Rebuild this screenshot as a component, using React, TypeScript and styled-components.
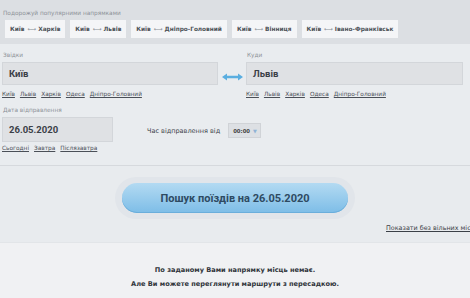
import React from 'react';
import styled, { createGlobalStyle } from 'styled-components';

const GlobalStyle = createGlobalStyle`
  html, body {
    margin: 0;
    padding: 0;
    background: #f0f1f3;
    font-family: "DejaVu Sans", Verdana, sans-serif;
    color: #333;
  }
`;

const Page = styled.div`
  width: 470px;
  overflow: hidden;
`;

const TopBar = styled.div`
  background: #dcdfe3;
  padding: 9px 0 6px 3px;
  height: 29px;
`;

const Hint = styled.div`
  font-size: 5.8px;
  line-height: 8px;
  color: #8d9298;
  margin-bottom: 3px;
`;

const ChipRow = styled.div`
  display: flex;
  gap: 5px;
  padding-left: 2px;
`;

const Chip = styled.a`
  display: flex;
  align-items: center;
  gap: 3px;
  height: 18px;
  padding: 0 5px;
  background: #f4f5f7;
  font-size: 5.8px;
  font-weight: 700;
  color: #4d5258;
  white-space: nowrap;
`;

const Arrow = styled.span`
  color: #8a9097;
  font-weight: 400;
  letter-spacing: -1px;
`;

const Form = styled.div`
  background: #e9ecef;
  padding: 7px 7px 0 2px;
  height: 114px;
  border-bottom: 1px solid #d6d9dd;
`;

const DirRow = styled.div`
  display: grid;
  grid-template-columns: 216px 28px 217px;
  align-items: start;
`;

const Field = styled.div`
  display: flex;
  flex-direction: column;
`;

const Label = styled.div`
  font-size: 5.8px;
  line-height: 8px;
  color: #8d9298;
  padding-left: 1px;
  margin-bottom: 3px;
`;

const Input = styled.div<{ $w?: number; $h?: number }>`
  width: ${({ $w }) => ($w ? `${$w}px` : '100%')};
  height: ${({ $h }) => $h ?? 23}px;
  box-sizing: border-box;
  background: #dfe1e4;
  border: 1px solid #d3d6da;
  display: flex;
  align-items: center;
  padding-left: 6px;
  font-family: Roboto, "Liberation Sans", Arial, sans-serif;
  font-size: 9.5px;
  font-weight: 700;
  color: #3b4047;
`;

const Links = styled.div<{ $top?: number }>`
  display: flex;
  gap: 5px;
  margin-top: ${({ $top }) => $top ?? 5}px;
  font-size: 5.8px;
  line-height: 8px;
`;

const QuickLink = styled.a`
  color: #4a4f57;
  text-decoration: underline;
`;

const Swap = styled.div`
  display: flex;
  justify-content: center;
  padding-top: 22px;
`;

const DateRow = styled.div`
  display: flex;
  align-items: flex-start;
  margin-top: 8px;
`;

const TimeGroup = styled.div`
  display: flex;
  align-items: center;
  gap: 8px;
  margin-left: 34px;
  margin-top: 17px;
  font-size: 6.5px;
  color: #3b4047;
`;

const Select = styled.div`
  display: flex;
  align-items: center;
  gap: 3px;
  height: 13px;
  padding: 0 3px 0 4px;
  background: #dde0e4;
  border: 1px solid #d0d3d7;
  font-size: 5.3px;
  font-weight: 700;
  color: #444;
`;

const Caret = styled.span`
  color: #8fb3d6;
  font-size: 5px;
`;

const SearchBlock = styled.div`
  background: #e8ebee;
  height: 77px;
  box-sizing: border-box;
  padding-top: 11px;
  display: flex;
  flex-direction: column;
  align-items: center;
  border-bottom: 1px solid #e2e5e8;
`;

const Halo = styled.div`
  padding: 6px 7px;
  border-radius: 22px;
  background: #e1e5ea;
`;

const SearchButton = styled.button`
  width: 226px;
  height: 30px;
  border: none;
  border-radius: 16px;
  background: linear-gradient(#b3daf2, #7dbde7);
  box-shadow: inset 0 -1px 0 #6aaedb;
  font-family: Roboto, "Liberation Sans", Arial, sans-serif;
  font-size: 11px;
  font-weight: 700;
  color: #2e4a62;
`;

const NoFree = styled.a`
  align-self: flex-start;
  margin-top: 5px;
  margin-left: 386px;
  font-size: 6.4px;
  color: #3b4047;
  text-decoration: underline;
  white-space: nowrap;
`;

const Notice = styled.div`
  padding-top: 20px;
  text-align: center;
  font-size: 6.6px;
  font-weight: 700;
  color: #2f343a;
  line-height: 14px;
`;

const routes = ['Харків', 'Львів', 'Дніпро-Головний', 'Вінниця', 'Івано-Франківськ'];
const cities = ['Київ', 'Львів', 'Харків', 'Одеса', 'Дніпро-Головний'];

const SwapIcon = () => (
  <svg width="21" height="8" viewBox="0 0 21 8">
    <path d="M0 4 L5 0.5 L5 2.8 L16 2.8 L16 0.5 L21 4 L16 7.5 L16 5.2 L5 5.2 L5 7.5 Z" fill="#5aaee0" />
  </svg>
);

const App: React.FC = () => (
  <Page>
    <GlobalStyle />
    <TopBar>
      <Hint>Подорожуй популярними напрямками</Hint>
      <ChipRow>
        {routes.map(r => (
          <Chip key={r}>
            Київ <Arrow>←→</Arrow> {r}
          </Chip>
        ))}
      </ChipRow>
    </TopBar>
    <Form>
      <DirRow>
        <Field>
          <Label>Звідки</Label>
          <Input>Київ</Input>
          <Links>
            {cities.map(c => <QuickLink key={c}>{c}</QuickLink>)}
          </Links>
        </Field>
        <Swap>
          <SwapIcon />
        </Swap>
        <Field>
          <Label>Куди</Label>
          <Input>Львів</Input>
          <Links>
            {cities.map(c => <QuickLink key={c}>{c}</QuickLink>)}
          </Links>
        </Field>
      </DirRow>
      <DateRow>
        <Field>
          <Label>Дата відправлення</Label>
          <Input $w={111} $h={25}>26.05.2020</Input>
          <Links $top={2}>
            <QuickLink>Сьогодні</QuickLink>
            <QuickLink>Завтра</QuickLink>
            <QuickLink>Післязавтра</QuickLink>
          </Links>
        </Field>
        <TimeGroup>
          Час відправлення від
          <Select>
            00:00 <Caret>▼</Caret>
          </Select>
        </TimeGroup>
      </DateRow>
    </Form>
    <SearchBlock>
      <Halo>
        <SearchButton>Пошук поїздів на 26.05.2020</SearchButton>
      </Halo>
      <NoFree>Показати без вільних місць</NoFree>
    </SearchBlock>
    <Notice>
      По заданому Вами напрямку місць немає.
      <br />
      Але Ви можете переглянути маршрути з пересадкою.
    </Notice>
  </Page>
);

export default App;
